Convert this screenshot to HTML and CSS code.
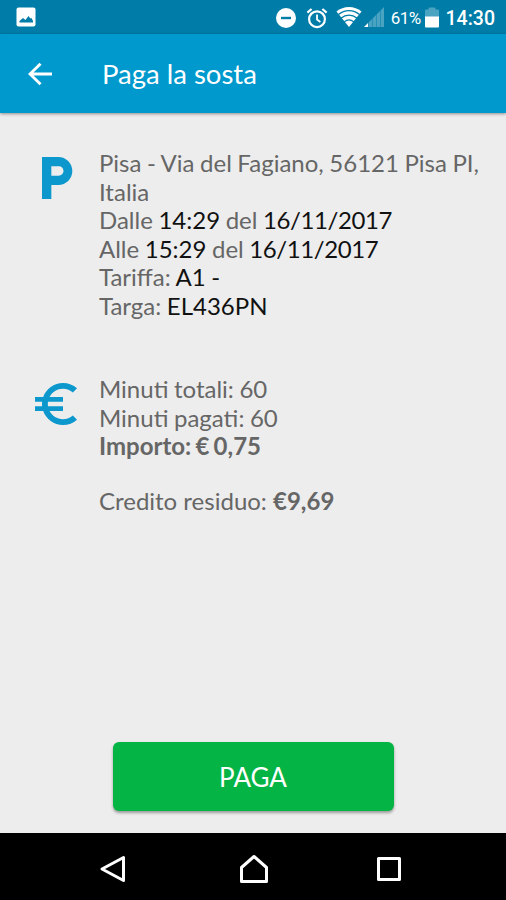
FILE: index.html
```html
<!DOCTYPE html>
<html lang="it">
<head>
  <meta charset="UTF-8" />
  <meta name="viewport" content="width=device-width, initial-scale=1.0"/>
  <title>Paga la sosta</title>

  <link rel="stylesheet" href="styles.css">
</head>
<body>

  <!-- Status bar -->
  <div class="status-bar">
    <svg class="picture-icon" width="20" height="20" viewBox="0 0 20 20">
      <rect x="0.5" y="0.5" width="19" height="19" rx="2" fill="#fff"/>
      <path d="M3.5 15.5v-1.5l3.5-3 2.5 2 3-4 1.8 2.5 1-.8 1.7 3.3v1.5z" fill="#007ca8"/>
    </svg>
    <div class="status-right">
      <svg class="dnd-icon" width="20" height="20" viewBox="0 0 20 20">
        <circle cx="10" cy="10" r="10" fill="#fff"/>
        <path d="M5 10h10" stroke="#007ca8" stroke-width="2.4"/>
      </svg>
      <svg class="alarm-icon" width="22" height="22" viewBox="0 0 22 22" fill="none" stroke="#fff">
        <circle cx="11" cy="12.2" r="7.9" stroke-width="2.2"/>
        <path d="M11 7.6v5l3.4 2.3" stroke-width="1.8"/>
        <path d="M1.4 5.6l4.2-3.6M20.6 5.6l-4.2-3.6" stroke-width="2.2"/>
      </svg>
      <svg class="wifi-icon" width="26" height="22" viewBox="0 0 26 22">
        <path d="M13 21L.5 5.5C4 2.5 8.3 1 13 1s9 1.500 12.500 4.500z" fill="#fff"/>
        <path d="M2.500 8.600c6-5.300 15-5.300 21 0M5.200 12.100c4.700-4 10.900-4 15.600 0M8.300 15.800c2.900-2.300 6.500-2.300 9.400 0" fill="none" stroke="#007ca8" stroke-width="1.300"/>
      </svg>
      <svg class="signal-icon" width="20" height="20" viewBox="0 0 20 20">
        <path d="M4.500 15.500L8 12v8H4.500zM8.500 11.500l3.500-3.500v12H8.500zM12.500 7.500l3.500-3.500v16h-3.500zM16.500 3.500L20 0v20h-3.500z" fill="#4ba3c2"/>
        <path d="M0 20l4-4v4z" fill="#fff"/>
      </svg>
      <span class="battery-level">61%</span>
      <svg class="battery-icon" width="14" height="21" viewBox="0 0 14 21">
        <path d="M0 10V3.500Q0 2.500 1 2.500h2.500V1.500Q3.500.5 4.500.5h5q1 0 1 1v1H13q1 0 1 1V10z" fill="#4ba3c2"/>
        <path d="M0 9.500h14v10q0 1-1 1H1q-1 0-1-1z" fill="#fff"/>
      </svg>
      <span class="clock">14:30</span>
    </div>
  </div>

  <!-- App bar -->
  <header class="app-bar">
    <svg class="back-icon" width="24" height="24" viewBox="0 0 24 24">
      <path d="M24 12H3M12.500 1.700L2 12l10.500 10.300" fill="none" stroke="#fff" stroke-width="2.900"/>
    </svg>
    <h1>Paga la sosta</h1>
  </header>

  <!-- Parking summary -->
  <main class="content">
    <section class="info parking">
      <svg class="info-icon" width="56" height="56" viewBox="0 0 24 24">
        <path d="M13 3H6v18h4v-6h3c3.310 0 6-2.690 6-6s-2.690-6-6-6zm.2 8H10V7h3.200c1.100 0 2 .9 2 2s-.9 2-2 2z"/>
      </svg>
      <div class="info-text">
        <p>Pisa - Via del Fagiano, 56121 Pisa PI, Italia</p>
        <p>Dalle <span class="value">14:29</span> del <span class="value date">16/11/2017</span></p>
        <p>Alle <span class="value">15:29</span> del <span class="value date">16/11/2017</span></p>
        <p>Tariffa: <span class="value">A1 -</span></p>
        <p>Targa: <span class="value">EL436PN</span></p>
      </div>
    </section>

    <section class="info payment">
      <svg class="info-icon" width="56" height="56" viewBox="0 0 24 24">
        <path d="M15 18.500c-2.510 0-4.680-1.420-5.760-3.500H15v-2H8.580c-.05-.33-.08-.66-.08-1s.03-.67.08-1H15V9H9.240C10.320 6.920 12.500 5.500 15 5.500c1.610 0 3.090.59 4.230 1.570L21 5.300C19.410 3.870 17.300 3 15 3c-3.920 0-7.240 2.510-8.480 6H3v2h3.060c-.04.33-.06.66-.06 1s.02.67.06 1H3v2h3.520c1.240 3.490 4.560 6 8.480 6 2.310 0 4.410-.87 6-2.300l-1.780-1.770c-1.130.98-2.600 1.570-4.220 1.570z"/>
      </svg>
      <div class="info-text">
        <p>Minuti totali: 60</p>
        <p>Minuti pagati: 60</p>
        <p><b class="amount">Importo: € 0,75</b></p>
        <p class="credit">Credito residuo: <b>€9,69</b></p>
      </div>
    </section>

    <button class="pay-btn">PAGA</button>
  </main>

  <!-- Android navigation -->
  <nav class="nav-bar">
    <svg width="28" height="28" viewBox="0 0 28 28"><path d="M24.500 2.500v23L3 14z"/></svg>
    <svg class="home-icon" width="28" height="28" viewBox="0 0 28 28"><path d="M1.500 12.500L14 1.500l12.500 11v14h-25z"/></svg>
    <svg width="28" height="28" viewBox="0 0 28 28"><path d="M3.500 3.500h21v21h-21z"/></svg>
  </nav>

</body>
</html>
```
FILE: styles.css
```css
/* Global reset */
* {
  margin: 0;
  padding: 0;
  box-sizing: border-box;
}

body {
  display: flex;
  flex-direction: column;
  height: 100vh;
  font-family: 'Lato', sans-serif;
  background: #ededed;
  color: #666;
  overflow: hidden;
}

svg {
  display: block;
  flex-shrink: 0;
}

/* Status bar */
.status-bar {
  display: flex;
  align-items: center;
  justify-content: space-between;
  height: 34px;
  padding: 0 11px 0 16px;
  background: #007ca8;
  color: #fff;
  font-family: 'Roboto', sans-serif;
}
.status-right {
  display: flex;
  align-items: center;
}
.dnd-icon,
.alarm-icon {
  margin-top: 1px;
}
.alarm-icon {
  margin-left: 10px;
}
.wifi-icon {
  margin-left: 8px;
}
.signal-icon {
  margin-left: 2px;
}
.battery-level {
  margin-left: 7px;
  margin-top: 2px;
  font-size: 17px;
  letter-spacing: -0.6px;
}
.battery-icon {
  margin-left: 4px;
}
.clock {
  margin-left: 7px;
  margin-top: 2px;
  font-size: 19.5px;
  font-weight: 500;
}

/* App bar */
.app-bar {
  display: flex;
  align-items: center;
  height: 79px;
  padding-left: 28px;
  background: #0099cd;
  color: #fff;
  box-shadow: 0 1px 3px rgba(0, 0, 0, 0.4);
}
.app-bar h1 {
  margin-left: 50px;
  font-size: 27.5px;
  font-weight: 400;
}

/* Content */
.content {
  flex: 1;
  display: flex;
  flex-direction: column;
  padding: 36px 20px 22px 28px;
}
.info {
  display: flex;
  gap: 15px;
}
.info-icon {
  margin-top: 1px;
  fill: #0c98cd;
}
.info-text {
  font-size: 24px;
  line-height: 28.5px;
  word-spacing: -0.6px;
}
.payment {
  margin-top: 55px;
}
.value {
  color: #111;
}
.date {
  letter-spacing: -0.4px;
}
.info-text b {
  font-weight: 700;
}
.amount {
  word-spacing: -1.6px;
}
.credit {
  margin-top: 26.5px;
  word-spacing: 0;
}

.pay-btn {
  align-self: center;
  width: 281px;
  height: 69px;
  margin-top: auto;
  margin-right: 8px;
  border: none;
  border-radius: 6px;
  background: #04b445;
  color: #fff;
  font-family: inherit;
  font-size: 26px;
  box-shadow: 0 2px 3px rgba(0, 0, 0, 0.35);
}

/* Navigation bar */
.nav-bar {
  display: flex;
  align-items: center;
  justify-content: space-between;
  height: 67px;
  padding: 4px 103px 0 99px;
  background: #000;
}
.nav-bar path {
  fill: none;
  stroke: #fff;
  stroke-width: 3;
  stroke-linejoin: round;
}
.home-icon {
  margin-left: 5px;
}
```
